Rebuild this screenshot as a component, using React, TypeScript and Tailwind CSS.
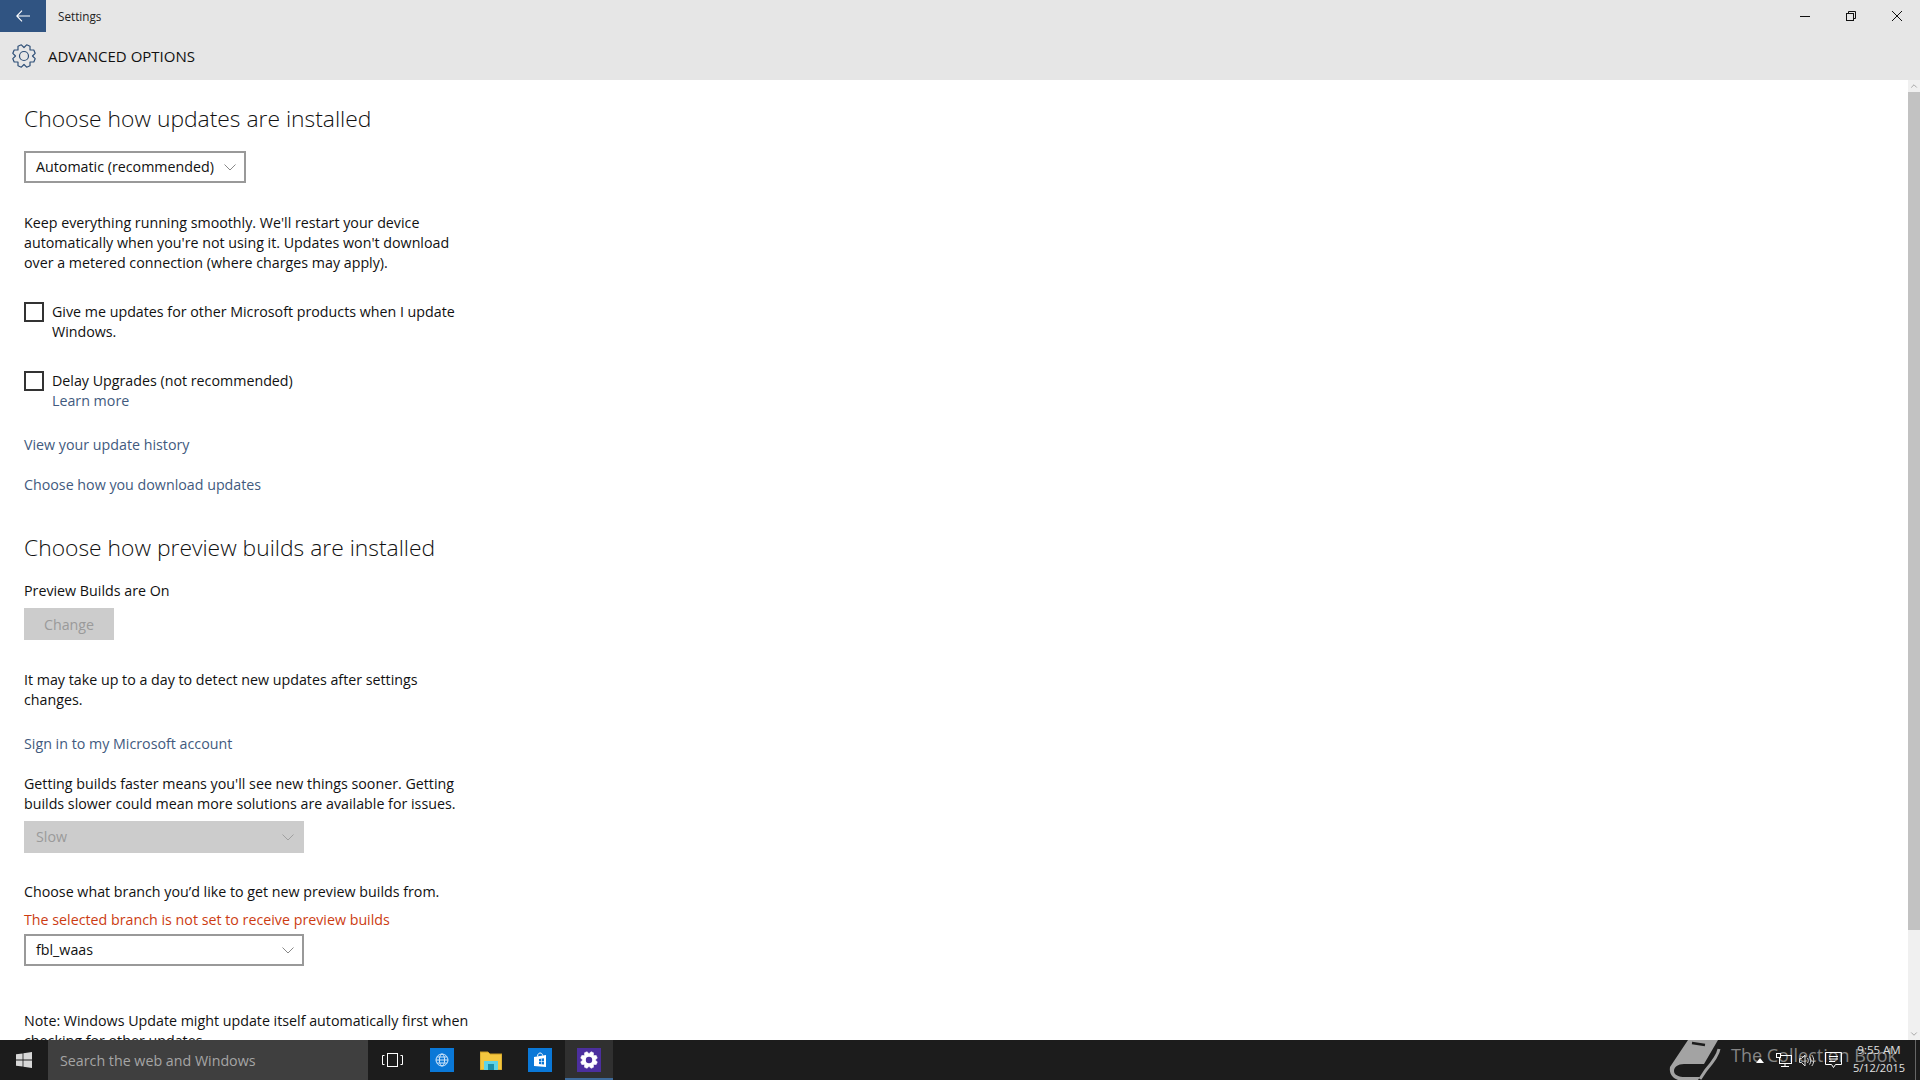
import React from "react";
import { ChevronDown, ChevronUp } from "lucide-react";

const gearPath = (teeth: number, R: number, r: number, c: number) => {
  const pts: string[] = [];
  const step = (Math.PI * 2) / teeth;
  for (let i = 0; i < teeth; i++) {
    const a = i * step + step / 2;
    const p = (rad: number, ang: number) => `${(c + rad * Math.cos(ang)).toFixed(2)} ${(c + rad * Math.sin(ang)).toFixed(2)}`;
    pts.push(p(r, a - step * 0.5), p(R, a - step * 0.2), p(R, a + step * 0.2));
  }
  return "M" + pts.join("L") + "Z";
};

const Link = ({ children, className = "" }: { children: React.ReactNode; className?: string }) => (
  <div className={"text-[#425a7e] h-5 " + className}>{children}</div>
);

const Chev = ({ color = "#888" }: { color?: string }) => (
  <svg width="12" height="7" viewBox="0 0 12 7" fill="none" stroke={color} strokeWidth="1"><path d="M0.500 0.500L6 6l5.500-5.500" /></svg>
);

const Check = ({ children, className = "" }: { children: React.ReactNode; className?: string }) => (
  <div className={"flex gap-2 " + className}>
    <div className="w-5 h-5 border-2 border-[#333] shrink-0" />
    <div>{children}</div>
  </div>
);

const Select = ({ label, w, disabled, className = "" }: { label: string; w: string; disabled?: boolean; className?: string }) => (
  <div className={`h-8 ${w} flex items-center justify-between ${disabled ? "bg-[#cccccc] text-[#9a9a9a] pl-3 pr-[10px]" : "border-2 border-[#999] text-[#111] pl-[10px] pr-2"} ${className}`}>
    <span>{label}</span>
    <Chev color={disabled ? "#a0a0a0" : "#888"} />
  </div>
);

export default function App() {
  return (
    <div
      className="w-[1920px] h-[1080px] overflow-hidden flex flex-col bg-white text-[#111] text-[14.25px] leading-5"
      style={{ fontFamily: '"Open Sans", "Noto Sans", sans-serif' }}
    >
      <div className="bg-[#e6e6e6] h-20 shrink-0 flex flex-col">
        <div className="h-8 flex items-center">
          <div className="w-[46px] h-8 bg-[#305482] flex items-center justify-center">
            <svg width="14" height="12" viewBox="0 0 14 12" fill="none" stroke="#fff" strokeWidth="1.1"><path d="M14 6H1M6 0.700L0.800 6 6 11.300" /></svg>
          </div>
          <div className="ml-[12px] text-[11.7px] text-[#222] -mt-px">Settings</div>
          <div className="ml-auto flex items-center gap-9 mr-[18px]">
            <svg width="10" height="10" viewBox="0 0 10 10" stroke="#111" strokeWidth="1"><path d="M0 5.500h10" /></svg>
            <svg width="10" height="10" viewBox="0 0 10 10" fill="none" stroke="#111" strokeWidth="1">
              <rect x="0.500" y="2.500" width="7" height="7" />
              <path d="M2.500 2.500v-2h7v7h-2" />
            </svg>
            <svg width="10" height="10" viewBox="0 0 10 10" stroke="#111" strokeWidth="1"><path d="M0 0l10 10M10 0L0 10" /></svg>
          </div>
        </div>
        <div className="h-12 flex items-center pl-3">
          <svg width="24" height="24" viewBox="0 0 24 24" fill="none" stroke="#2f5078" strokeWidth="1.200" strokeLinejoin="round">
            <path d={gearPath(8, 11.500, 8.500, 12)} />
            <circle cx="12" cy="12" r="4.500" />
          </svg>
          <div className="ml-[12px] text-[15px] text-[#111] font-medium">ADVANCED OPTIONS</div>
        </div>
      </div>

      <div className="flex-1 flex min-h-0">
        <div className="flex-1 overflow-hidden pl-6 pt-[21px] whitespace-nowrap">
          <h1 className="text-[22.85px] leading-9 h-9 font-light text-[#111]">Choose how updates are installed</h1>
          <Select label="Automatic (recommended)" w="w-[222px]" className="mt-[14px]" />
          <p className="mt-[30px]">
            Keep everything running smoothly. We'll restart your device<br />
            automatically when you're not using it. Updates won't download<br />
            over a metered connection (where charges may apply).
          </p>
          <Check className="mt-[29px]">Give me updates for other Microsoft products when I update<br />Windows.</Check>
          <Check className="mt-[29px]">
            Delay Upgrades (not recommended)
            <Link>Learn more</Link>
          </Check>
          <Link className="mt-6">View your update history</Link>
          <Link className="mt-5">Choose how you download updates</Link>
          <h2 className="mt-[35px] text-[22.85px] leading-9 h-9 font-light text-[#111]">Choose how preview builds are installed</h2>
          <div className="mt-[15px]">Preview Builds are On</div>
          <div className="mt-[7px] w-[90px] h-8 bg-[#cccccc] text-[#9a9a9a] flex items-center justify-center pt-px">Change</div>
          <p className="mt-[30px]">It may take up to a day to detect new updates after settings<br />changes.</p>
          <Link className="mt-[24px]">Sign in to my Microsoft account</Link>
          <p className="mt-5">Getting builds faster means you'll see new things sooner. Getting<br />builds slower could mean more solutions are available for issues.</p>
          <Select label="Slow" w="w-[280px]" disabled className="mt-[7px]" />
          <div className="mt-[29px]">Choose what branch you’d like to get new preview builds from.</div>
          <div className="mt-2 text-[#cc3c12]">The selected branch is not set to receive preview builds</div>
          <Select label="fbl_waas" w="w-[280px]" className="mt-1" />
          <p className="mt-[45px]">Note: Windows Update might update itself automatically first when<br />checking for other updates.</p>
        </div>
        <div className="w-3 bg-[#f0f0f0] flex flex-col shrink-0">
          <div className="h-3 flex items-center justify-center"><ChevronUp size={10} color="#999" strokeWidth={2} /></div>
          <div className="h-[838px] bg-[#c2c2c2]" />
          <div className="flex-1" />
          <div className="h-3 flex items-center justify-center"><ChevronDown size={10} color="#999" strokeWidth={2} /></div>
        </div>
      </div>

      <div className="h-10 shrink-0 bg-[#1c1c1c] flex items-stretch relative">
        <div className="w-12 flex items-center justify-center">
          <svg width="16" height="16" viewBox="0 0 16 16" fill="#d8d8d8"><path d="M0 2.300l6.600-.9v6.200H0zM7.400 1.300L16 0v7.600H7.400zM0 8.400h6.600v6.200L0 13.700zM7.400 8.400H16V16l-8.600-1.300z" /></svg>
        </div>
        <div className="w-[320px] bg-[#3f3f3f] flex items-center pl-3 pt-[2px] text-[#a5a5a5]">Search the web and Windows</div>
        <div className="w-[48px] flex items-center justify-center">
          <svg width="21" height="14" viewBox="0 0 21 14" fill="none" stroke="#fff" strokeWidth="1"><rect x="5.500" y="0.500" width="10" height="13" /><path d="M2.500 2.500H.5v9h2M18.500 2.500h2v9h-2" /></svg>
        </div>
        <div className="w-[14px]" />
        <div className="w-6 h-6 mt-2 bg-[#0a78d7] flex items-center justify-center">
          <svg width="14" height="14" viewBox="0 0 14 14" fill="none" stroke="#cfe5fa" strokeWidth="1"><circle cx="7" cy="7" r="6" /><ellipse cx="7" cy="7" rx="2.600" ry="6" /><path d="M1 7h12M2 4h10M2 10h10" /></svg>
        </div>
        <div className="w-[26px]" />
        <div className="w-[22px] h-6 mt-2">
          <svg width="22" height="20" viewBox="0 0 22 20" className="mt-[2px]">
            <path d="M0 2h8l2 2h12v16H0z" fill="#f3c63f" stroke="#c99a22" strokeWidth="1" />
            <rect x="4" y="11" width="14" height="9" fill="#5fd3e6" />
            <rect x="8" y="14" width="6" height="6" fill="#1c8fa8" />
          </svg>
        </div>
        <div className="w-[26px]" />
        <div className="w-6 h-6 mt-2 bg-[#0a78d7] flex items-center justify-center">
          <svg width="14" height="16" viewBox="0 0 14 16" fill="#fff">
            <path d="M1 5l12-2v12l-12-1z" />
            <path d="M4.500 4.500C4.500 0 9.500 0 9.500 3.500" fill="none" stroke="#fff" strokeWidth="1" />
            <path d="M6 7l5-.8v6.300L6 12z" fill="#0a78d7" />
            <path d="M8.500 6.500v6M6 9.500h5" stroke="#fff" strokeWidth="0.600" />
          </svg>
        </div>
        <div className="w-[13px]" />
        <div className="w-12 bg-[#303030] border-b-2 border-[#3d6a9a] flex justify-center pt-2">
          <div className="w-6 h-6 bg-[#4c2f9e] flex items-center justify-center">
            <svg width="18" height="18" viewBox="0 0 18 18">
              <path d={gearPath(8, 8.500, 6.300, 9)} fill="#fff" stroke="#fff" strokeWidth="0.600" strokeLinejoin="round" />
              <circle cx="9" cy="9" r="3.200" fill="#4c2f9e" />
            </svg>
          </div>
        </div>

        <svg className="absolute left-[1660px] top-0" width="64" height="40" viewBox="0 0 64 40" fill="none">
          <path d="M28 0H58L44 24H24C18 24 14 27 14 31C14 35 19 37 25 37H40L38 40H18C12 38 9 33 10 27Z" fill="#a3a3a3" />
          <path d="M32 3L45 5" stroke="#1c1c1c" strokeWidth="2.500" />
          <path d="M59 9C58 15 52 23 46 30L40 39" stroke="#a3a3a3" strokeWidth="3" />
        </svg>
        <div className="absolute left-[1731px] top-[3px] text-[18px] leading-6 text-[#858585]">The Collection Book</div>

        <div className="absolute left-[1756px] top-[18px] w-0 h-0 border-l-[4px] border-r-[4px] border-b-[5px] border-l-transparent border-r-transparent border-b-white" />
        <svg className="absolute left-[1776px] top-[13px]" width="16" height="15" viewBox="0 0 16 15" fill="none" stroke="#fff" strokeWidth="1"><rect x="3.500" y="2.500" width="12" height="8" /><path d="M9 10.500v3M5 13.500h8" /><rect x="0.500" y="0.500" width="4" height="4" fill="#1c1c1c" /></svg>
        <svg className="absolute left-[1799px] top-[14px]" width="16" height="13" viewBox="0 0 16 13" fill="none" stroke="#ddd" strokeWidth="1"><path d="M.5 4.500h2l3.500-3.500v11L2.500 8.500h-2z" /><path d="M8.500 4c1 1.500 1 3.500 0 5M10.500 2.500c1.800 2.500 1.800 5.500 0 8M12.800 1c2.600 3.500 2.600 7.500 0 11" /></svg>
        <svg className="absolute left-[1825px] top-[12px]" width="17" height="17" viewBox="0 0 17 17" fill="none" stroke="#fff" strokeWidth="1"><path d="M.5 .5h16v12h-6l-2 3-2-3h-6z" /><path d="M4 4.500h9M4 7h9M4 9.500h6" /></svg>
        <div className="absolute left-[1849px] top-px w-[60px] text-center leading-[18px] text-[#e0e0e0]">
          <div className="text-[11.5px]">9:55 AM</div>
          <div className="text-[11px]">5/12/2015</div>
        </div>
        <div className="absolute right-[4px] top-0 h-10 w-px bg-[#666]" />
      </div>
    </div>
  );
}
